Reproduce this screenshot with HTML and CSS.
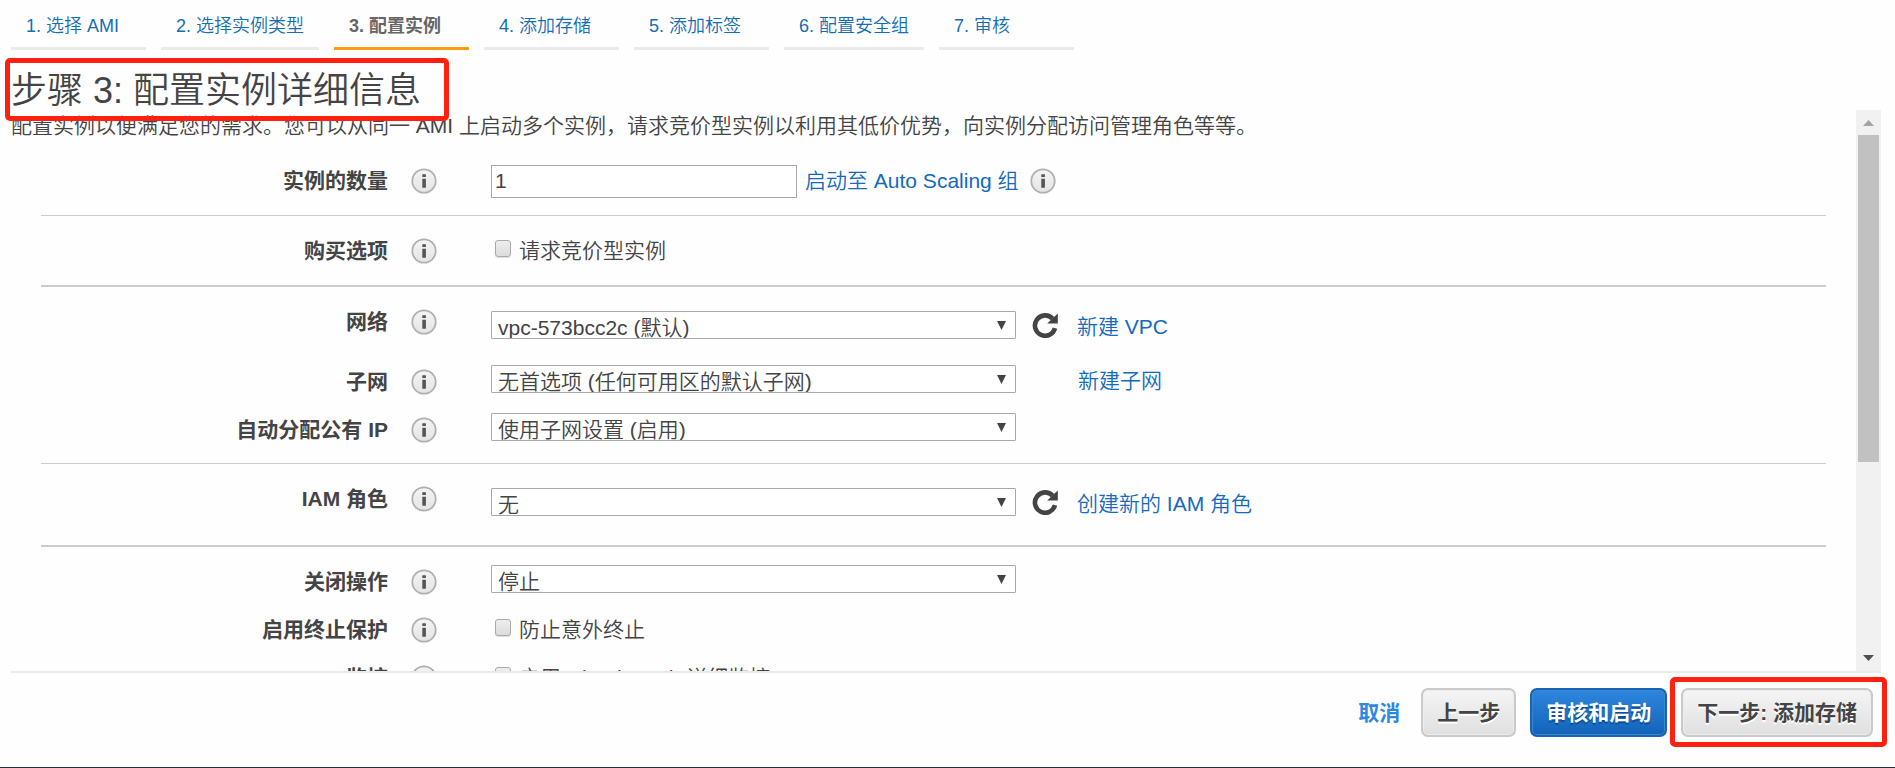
FILE: index.html
```html
<!DOCTYPE html>
<html lang="zh-CN">
<head>
<meta charset="utf-8">
<title>步骤 3: 配置实例详细信息</title>
<link rel="stylesheet" href="styles.css">
</head>
<body>
<svg class="sprite" aria-hidden="true">
  <defs>
    <linearGradient id="info-fill" x1="0" y1="0" x2="0" y2="1">
      <stop offset="0" stop-color="#f4f4f4"/>
      <stop offset="1" stop-color="#e4e4e4"/>
    </linearGradient>
  </defs>
  <symbol id="info" viewBox="0 0 26 26">
    <circle cx="13" cy="13" r="11.7" fill="url(#info-fill)" stroke="#b0b0b0" stroke-width="1.8"/>
    <path d="M11.3 6.2h3.6v2.8h-3.6zM11.3 10.8h3.6v9h-3.6z" fill="#555"/>
  </symbol>
  <symbol id="refresh" viewBox="0 0 26 26">
    <path d="M20.6 6.6A10.2 10.2 0 1 0 23 16.2" fill="none" stroke="#444" stroke-width="4.6"/>
    <path d="M25.8 1.4V11.6H15.2z" fill="#444"/>
  </symbol>
</svg>

<nav class="steps">
  <a class="step" href="#">1. 选择 AMI</a>
  <a class="step" href="#">2. 选择实例类型</a>
  <a class="step step--current" href="#" aria-current="step">3. 配置实例</a>
  <a class="step" href="#">4. 添加存储</a>
  <a class="step" href="#">5. 添加标签</a>
  <a class="step" href="#">6. 配置安全组</a>
  <a class="step" href="#">7. 审核</a>
</nav>

<h1 class="title">步骤 3: 配置实例详细信息</h1>

<div class="pane">
  <main class="content">
    <p class="intro">配置实例以便满足您的需求。您可以从同一 AMI 上启动多个实例，请求竞价型实例以利用其低价优势，向实例分配访问管理角色等等。</p>

    <section class="group">
      <div class="row">
        <label class="label" for="count">实例的数量</label>
        <svg class="icon"><use href="#info"/></svg>
        <div class="control">
          <input class="textbox" id="count" type="text" value="1">
          <a class="link link--near" href="#">启动至 Auto Scaling 组</a>
          <svg class="icon icon--after"><use href="#info"/></svg>
        </div>
      </div>
    </section>

    <section class="group group--strong">
      <div class="row">
        <span class="label">购买选项</span>
        <svg class="icon"><use href="#info"/></svg>
        <div class="control">
          <input class="check" id="spot" type="checkbox"><label for="spot">请求竞价型实例</label>
        </div>
      </div>
    </section>

    <section class="group group--network">
      <div class="row row--refresh">
        <label class="label" for="vpc">网络</label>
        <svg class="icon"><use href="#info"/></svg>
        <div class="control">
          <span class="picker"><select class="select" id="vpc"><option>vpc-573bcc2c (默认)</option></select></span>
          <button class="refresh" type="button" aria-label="刷新"><svg class="icon"><use href="#refresh"/></svg></button>
          <a class="link" href="#">新建 VPC</a>
        </div>
      </div>
      <div class="row row--select">
        <label class="label" for="subnet">子网</label>
        <svg class="icon"><use href="#info"/></svg>
        <div class="control">
          <span class="picker"><select class="select" id="subnet"><option>无首选项 (任何可用区的默认子网)</option></select></span>
          <a class="link link--far" href="#">新建子网</a>
        </div>
      </div>
      <div class="row row--select">
        <label class="label" for="ip">自动分配公有 IP</label>
        <svg class="icon"><use href="#info"/></svg>
        <div class="control">
          <span class="picker"><select class="select" id="ip"><option>使用子网设置 (启用)</option></select></span>
        </div>
      </div>
    </section>

    <section class="group group--strong">
      <div class="row row--refresh">
        <label class="label" for="iam">IAM 角色</label>
        <svg class="icon"><use href="#info"/></svg>
        <div class="control">
          <span class="picker"><select class="select" id="iam"><option>无</option></select></span>
          <button class="refresh" type="button" aria-label="刷新"><svg class="icon"><use href="#refresh"/></svg></button>
          <a class="link" href="#">创建新的 IAM 角色</a>
        </div>
      </div>
    </section>

    <section class="group">
      <div class="row row--select">
        <label class="label" for="shutdown">关闭操作</label>
        <svg class="icon"><use href="#info"/></svg>
        <div class="control">
          <span class="picker"><select class="select" id="shutdown"><option>停止</option></select></span>
        </div>
      </div>
      <div class="row">
        <span class="label">启用终止保护</span>
        <svg class="icon"><use href="#info"/></svg>
        <div class="control">
          <input class="check" id="protect" type="checkbox"><label for="protect">防止意外终止</label>
        </div>
      </div>
      <div class="row">
        <span class="label">监控</span>
        <svg class="icon"><use href="#info"/></svg>
        <div class="control">
          <input class="check" id="monitor" type="checkbox"><label for="monitor">启用 CloudWatch 详细监控</label>
        </div>
      </div>
    </section>
  </main>
  <div class="scrollbar" aria-hidden="true">
    <svg class="arrow arrow--up" viewBox="0 0 11 6"><path d="M0 6L5.5 0L11 6z"/></svg>
    <div class="track"><div class="thumb"></div></div>
    <svg class="arrow" viewBox="0 0 11 6"><path d="M0 0h11L5.5 6z"/></svg>
  </div>
</div>

<footer class="footer">
  <a class="cancel" href="#">取消</a>
  <button class="button" type="button">上一步</button>
  <button class="button button--primary" type="button">审核和启动</button>
  <span class="highlight"><button class="button" type="button">下一步: 添加存储</button></span>
</footer>
</body>
</html>
```

FILE: styles.css
```css
* {
  box-sizing: border-box;
}

body {
  margin: 0;
  height: 100vh;
  display: flex;
  flex-direction: column;
  overflow: hidden;
  background: #fefefe;
  border-bottom: 1px solid #232f3e;
  color: #444;
  font-family: "Liberation Sans", "Noto Sans CJK SC", sans-serif;
  font-size: 21px;
  font-weight: 350;
  line-height: 32px;
}

a {
  color: #146eb4;
  text-decoration: none;
}

input,
select,
button {
  font: inherit;
  color: inherit;
}

.sprite {
  position: absolute;
  width: 0;
  height: 0;
}

/* Wizard steps */
.steps {
  flex: none;
  display: flex;
  gap: 15px;
  height: 50px;
  padding: 0 11px;
  font-size: 18px;
  white-space: nowrap;
}

.step {
  min-width: 135px;
  padding: 10px 15px 0;
  border-bottom: 3px solid #eaeaea;
}

.step--current {
  color: #666;
  font-weight: 700;
  border-color: #ff9b10;
}

.title {
  position: relative;
  z-index: 1;
  flex: none;
  align-self: flex-start;
  margin: 8px 5px -11px;
  padding: 2px 23px 0 1px;
  border: 5px solid #ff2010;
  border-radius: 5px;
  font-size: 36px;
  font-weight: 350;
  line-height: 51px;
}

/* Scrolling form */
.pane {
  flex: 1;
  min-height: 0;
  display: flex;
  margin: 0 14px 0 11px;
  border-bottom: 2px solid #eaeaea;
}

.content {
  flex: 1;
  overflow: hidden;
}

.intro {
  margin: 0 0 4px;
}

.group {
  margin: 0 30px;
  padding: 11px 0 10px;
  border-bottom: 1px solid #ccc;
}

.group--strong {
  border-bottom-width: 2px;
}

.group--network {
  padding-bottom: 9px;
}

.row {
  display: grid;
  grid-template-columns: 347px 26px 1fr;
  column-gap: 23px;
  align-items: center;
  height: 48px;
}

.label {
  text-align: right;
  font-weight: 700;
}

.icon {
  display: block;
  flex: none;
  width: 26px;
  height: 26px;
}

.icon--after {
  margin-left: 11px;
}

.control {
  display: flex;
  align-items: center;
  padding-left: 31px;
}

.row--refresh {
  margin-bottom: 12px;
}

.row--refresh .control {
  padding-top: 6px;
}

.row--select .control {
  padding-bottom: 6px;
}

.row--refresh .link,
.row--select .link {
  padding-top: 4px;
}

.textbox {
  width: 306px;
  height: 33px;
  padding: 0 3px;
  border: 1px solid #a9a9a9;
  background: #fff;
}

.link {
  color: #146abd;
  margin-left: 19px;
}

.link--near {
  margin-left: 8px;
}

.link--far {
  margin-left: 62px;
}

.check {
  appearance: none;
  width: 16px;
  height: 17px;
  margin: 0 8px 6px 4px;
  border: 1px solid #aaa;
  border-radius: 3px;
  background: linear-gradient(#eee, #dcdcdc);
  box-shadow: 0 1px 1px #ddd;
}

.picker {
  position: relative;
  display: flex;
}

.picker::after {
  content: "";
  position: absolute;
  top: 10px;
  right: 10px;
  width: 9px;
  height: 9px;
  background: #444;
  clip-path: polygon(0 0, 100% 0, 50% 100%);
  pointer-events: none;
}

.select {
  appearance: none;
  width: 525px;
  height: 28px;
  padding: 0 24px 0 6px;
  border: 1px solid #a9a9a9;
  border-radius: 1px;
  background: #fff;
}

.refresh {
  margin-left: 16px;
  padding: 0;
  border: 0;
  background: none;
}

/* Scrollbar */
.scrollbar {
  flex: none;
  display: flex;
  flex-direction: column;
  align-items: center;
  gap: 9px;
  width: 25px;
  padding: 10px 2px;
  background: #f1f1f1;
}

.arrow {
  flex: none;
  width: 11px;
  height: 6px;
  fill: #505050;
}

.arrow--up {
  fill: #a3a3a3;
}

.track {
  flex: 1;
  align-self: stretch;
}

.thumb {
  height: 64%;
  background: #c1c1c1;
}

/* Actions */
.footer {
  flex: none;
  display: flex;
  justify-content: flex-end;
  align-items: center;
  gap: 14px;
  height: 94px;
  padding: 0 22px 15px 0;
  font-weight: 700;
}

.cancel {
  margin-right: 7px;
  color: #2e88dd;
}

.button {
  height: 49px;
  padding: 0 14px;
  border: 2px solid #c9c9c9;
  border-radius: 7px;
  background: linear-gradient(#f5f5f5, #dfdfdf);
  box-shadow: inset 0 0 0 1px #ededed;
  text-shadow: 0 2px 0 #fff;
  white-space: nowrap;
}

.button--primary {
  border-color: #1464b8;
  background: linear-gradient(#2f86de, #1163b8);
  box-shadow: inset 0 0 0 1px #3f86cc;
  color: #fff;
  text-shadow: 0 2px 1px #0d4c90;
}

.highlight {
  position: relative;
  display: flex;
}

.highlight::after {
  content: "";
  position: absolute;
  inset: -11px -14px -10px -11px;
  border: 5px solid #ff2010;
  border-radius: 5px;
  pointer-events: none;
}
```
